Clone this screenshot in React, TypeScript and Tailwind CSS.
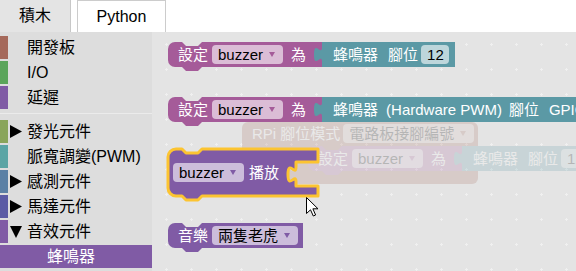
import type { ReactNode } from 'react'

const FONT = "font-['Liberation_Sans','Noto_Sans_CJK_TC',sans-serif]"

/** dropdown / number field sitting on a coloured block */
function Field({ children, arrow, tint }: { children: ReactNode; arrow?: boolean; tint?: string }) {
  return (
    <span className={`flex h-[19px] shrink-0 items-center rounded-[4px] bg-white/60 pl-[6px] text-black ${arrow ? 'pr-[8px]' : 'pr-[5px]'}`}>
      <span className="leading-none">{children}</span>
      {arrow && (
        <svg className="ml-[6px]" width="6" height="5" viewBox="0 0 6 5">
          <path d="M0 0H6L3 5Z" fill={tint} />
        </svg>
      )}
    </span>
  )
}

// output tab of a value block (same curve Blockly uses)
function Tab({ fill }: { fill: string }) {
  return (
    <svg className="absolute left-[-8px] top-[5px]" width="8" height="15" viewBox="0 0 8 15">
      <path d="M8,0 c0,10 -8,-8 -8,7.5 s8,-2.5 8,7.5 Z" fill={fill} />
    </svg>
  )
}

const notch = '[clip-path:polygon(0_0,100%_0,80%_100%,20%_100%)]'

function SetBlock({ className, notchBg, children }: { className: string; notchBg: string; children: ReactNode }) {
  return (
    <div className={`absolute flex h-[25px] w-max text-[15px] text-white ${className}`}>
      <div className="relative flex shrink-0 items-center rounded-l-[7px] bg-[#a55b99] pl-[10px] pr-[16px]">
        <span className={`absolute left-[14px] top-0 h-[4px] w-[20px] ${notchBg} ${notch}`} />
        <span className={`absolute left-[14px] top-full h-[4px] w-[20px] bg-[#a55b99] ${notch}`} />
        <span className="leading-none">設定</span>
        <span className="ml-[4px]">
          <Field arrow tint="#a55b99">buzzer</Field>
        </span>
        <span className="ml-[8px] leading-none">為</span>
      </div>
      <div className="relative flex shrink-0 items-center bg-[#5b99a5] pl-[11px]">
        <Tab fill="#5b99a5" />
        {children}
      </div>
    </div>
  )
}

const cats = [
  { name: '開發板', sw: 'bg-[#a5695b]' },
  { name: 'I/O', sw: 'bg-[#5ba55b]' },
  { name: '延遲', sw: 'bg-[#805ba5]' },
]
const cats2 = [
  { name: '發光元件', sw: 'bg-[#8aa55b]', arrow: 'r' },
  { name: '脈寬調變(PWM)', sw: 'bg-[#5ba5a5]', arrow: '' },
  { name: '感測元件', sw: 'bg-[#5b80a5]', arrow: 'r' },
  { name: '馬達元件', sw: 'bg-[#5b5ba5]', arrow: 'r' },
  { name: '音效元件', sw: 'bg-[#805ba5]', arrow: 'd' },
]

function Row({ name, sw, arrow }: { name: string; sw: string; arrow?: string }) {
  return (
    <div className="mb-[2px] flex h-[23px] items-center">
      <span className={`h-full w-[8px] ${sw}`} />
      <span className="flex w-[19px] pl-[2px]">
        {arrow === 'r' && (
          <svg width="12" height="13" viewBox="0 0 12 13">
            <path d="M0 0L12 6.5L0 13Z" fill="#000" />
          </svg>
        )}
        {arrow === 'd' && (
          <svg width="12" height="12" viewBox="0 0 12 12">
            <path d="M0 0H12L6 12Z" fill="#000" />
          </svg>
        )}
      </span>
      <span className="text-[16px] leading-none text-black">{name}</span>
    </div>
  )
}

export default function App() {
  return (
    <div className={`flex h-[271px] w-[576px] flex-col overflow-hidden whitespace-nowrap bg-white ${FONT}`}>
      {/* tabs */}
      <div className="flex h-[32px] shrink-0">
        <div className="flex w-[71px] items-center justify-center border-r border-[#c8c8c8] bg-[#e4e4e4] text-[16px] leading-none text-black">
          積木
        </div>
        <div className="ml-[6px] flex w-[89px] items-center justify-center border border-b-0 border-[#cccccc] text-[16px] leading-none text-black">
          Python
        </div>
      </div>

      <div className="flex flex-1">
        {/* toolbox */}
        <div className="w-[152px] shrink-0 bg-[#dddddd] pt-[4px]">
          {cats.map((c) => (
            <Row key={c.name} {...c} />
          ))}
          <div className="pb-[6px] pt-[2px]">
            <div className="h-px bg-[#ebebeb]" />
          </div>
          {cats2.map((c) => (
            <Row key={c.name} {...c} />
          ))}
          <div className="flex h-[23px] items-center bg-[#805ba5] pl-[47px] text-[16px] leading-none text-white">蜂鳴器</div>
        </div>

        {/* workspace */}
        <div className="relative flex-1 overflow-hidden bg-[#e4e4e4]">
          <svg className="absolute inset-0" width="424" height="239">
            <defs>
              <pattern id="grid" width="25" height="25" patternUnits="userSpaceOnUse">
                <path d="M13 12.5h3M14.5 11v3" stroke="#f0f0f0" strokeWidth="1" />
              </pattern>
            </defs>
            <rect width="100%" height="100%" fill="url(#grid)" />
          </svg>

          <SetBlock className="left-[16px] top-[10px]" notchBg="bg-[#e4e4e4]">
            <span className="leading-none">蜂鳴器</span>
            <span className="ml-[10px] leading-none">腳位</span>
            <span className="ml-[3px] mr-[6px]">
              <Field>12</Field>
            </span>
          </SetBlock>

          <SetBlock className="left-[16px] top-[65px]" notchBg="bg-[#e4e4e4]">
            <span className="leading-none">蜂鳴器</span>
            <span className="ml-[8px] leading-none">(Hardware PWM)</span>
            <span className="ml-[7px] leading-none">腳位</span>
            <span className="ml-[10px] pr-[60px] leading-none">GPIO</span>
          </SetBlock>

          {/* disabled / faded stack */}
          <div className="absolute inset-0 opacity-20">
            <div className="absolute left-[90px] top-[90px] h-[62px] w-[236px] rounded-[6px] bg-[#a5695b] text-[15px] text-white">
              <div className="flex h-[23px] items-center pl-[10px]">
                <span className="leading-none">RPi</span>
                <span className="ml-[4px] leading-none">腳位模式</span>
                <span className="ml-[3px]">
                  <Field arrow tint="#a5695b">電路板接腳編號</Field>
                </span>
              </div>
            </div>
            <SetBlock className="left-[156px] top-[114px]" notchBg="bg-[#a5695b]">
              <span className="leading-none">蜂鳴器</span>
              <span className="ml-[10px] leading-none">腳位</span>
              <span className="ml-[3px] mr-[40px]">
                <Field>12</Field>
              </span>
            </SetBlock>
          </div>

          {/* selected block: buzzer 播放 */}
          <svg className="absolute left-[14px] top-[115px]" width="156" height="56">
            <path
              transform="translate(2 2)"
              d="M0,8 A8,8 0 0 1 8,0 H14 L18,4 H30 L34,0 H150 V13 H128 V18 c0,10 -8,-8 -8,7.5 s8,-2.5 8,7.5 V37 H150 V47 H34 L30,51 H18 L14,47 H8 A8,8 0 0 1 0,39 Z"
              fill="#805ba5"
              stroke="#fcc431"
              strokeWidth="3"
              strokeLinejoin="round"
            />
          </svg>
          <div className="absolute left-[16px] top-[117px] flex h-[47px] items-center pl-[5px] text-[15px] text-white">
            <Field arrow tint="#805ba5">buzzer</Field>
            <span className="ml-[5px] leading-none">播放</span>
          </div>

          {/* 音樂 block */}
          <div className="absolute left-[16px] top-[191px] flex h-[25px] items-center rounded-l-[7px] bg-[#805ba5] pl-[10px] pr-[5px] text-[15px] text-white">
            <span className={`absolute left-[14px] top-0 h-[4px] w-[20px] bg-[#e4e4e4] ${notch}`} />
            <span className={`absolute left-[14px] top-full h-[4px] w-[20px] bg-[#805ba5] ${notch}`} />
            <span className="leading-none">音樂</span>
            <span className="ml-[4px]">
              <Field arrow tint="#805ba5">兩隻老虎</Field>
            </span>
          </div>

          {/* mouse pointer */}
          <svg className="absolute left-[154px] top-[165px]" width="13" height="20" viewBox="0 0 13 20">
            <path d="M0.5 0.5V16.5L4.5 12.8L7.3 19L9.6 18L6.9 11.8H12Z" fill="#fff" stroke="#000" strokeLinejoin="round" />
          </svg>
        </div>
      </div>
    </div>
  )
}
